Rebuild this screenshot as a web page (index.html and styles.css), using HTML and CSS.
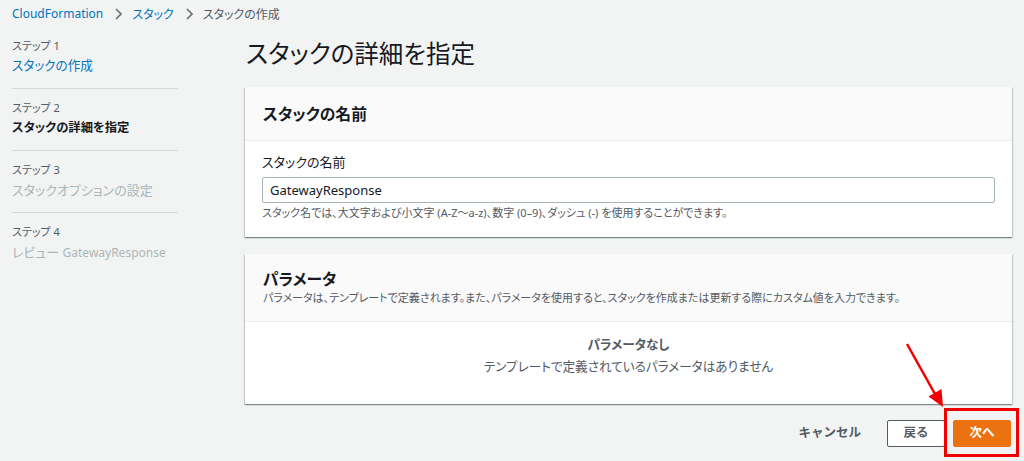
FILE: index.html
```html
<!DOCTYPE html>
<html lang="ja">
<head>
<meta charset="utf-8">
<title>スタックの詳細を指定</title>
<link rel="stylesheet" href="styles.css">
</head>
<body>
<div class="page">
  <nav class="crumbs">
    <a class="crumb-link" href="#">CloudFormation</a>
    <svg class="chev" width="7" height="12" viewBox="0 0 7 12"><path d="M1 1 L6 6 L1 11" fill="none" stroke="#687078" stroke-width="1.6"/></svg>
    <a class="crumb-link" href="#">スタック</a>
    <svg class="chev" width="7" height="12" viewBox="0 0 7 12"><path d="M1 1 L6 6 L1 11" fill="none" stroke="#687078" stroke-width="1.6"/></svg>
    <span class="crumb-current">スタックの作成</span>
  </nav>
  <div class="layout">
    <aside class="steps">
      <div class="step">
        <div class="step-label">ステップ 1</div>
        <a class="step-name step-link" href="#">スタックの作成</a>
      </div>
      <div class="step">
        <div class="step-label">ステップ 2</div>
        <div class="step-name step-active">スタックの詳細を指定</div>
      </div>
      <div class="step">
        <div class="step-label">ステップ 3</div>
        <div class="step-name step-disabled">スタックオプションの設定</div>
      </div>
      <div class="step step-last">
        <div class="step-label">ステップ 4</div>
        <div class="step-name step-disabled">レビュー <span class="latin">GatewayResponse</span></div>
      </div>
    </aside>
    <main class="main">
      <h1 class="title">スタックの詳細を指定</h1>
      <section class="card">
        <div class="card-head card-head-1">
          <h2 class="card-title">スタックの名前</h2>
        </div>
        <div class="card-body card-body-1">
          <label class="field-label" for="stackname">スタックの名前</label>
          <input class="field-input" id="stackname" type="text" value="GatewayResponse">
          <div class="field-help">スタック名では、大文字および小文字 (A-Z〜a-z)、数字 (0–9)、ダッシュ (-) を使用することができます。</div>
        </div>
      </section>
      <section class="card">
        <div class="card-head card-head-2">
          <h2 class="card-title">パラメータ</h2>
          <div class="card-desc">パラメータは、テンプレートで定義されます。また、パラメータを使用すると、スタックを作成または更新する際にカスタム値を入力できます。</div>
        </div>
        <div class="card-body card-body-2">
          <div class="empty-title">パラメータなし</div>
          <div class="empty-text">テンプレートで定義されているパラメータはありません</div>
        </div>
      </section>
      <div class="actions">
        <button class="btn btn-link">キャンセル</button>
        <button class="btn btn-normal">戻る</button>
        <span class="next-wrap">
          <button class="btn btn-primary">次へ</button>
          <span class="highlight-box"></span>
        </span>
      </div>
    </main>
  </div>
  <svg class="annot-arrow" width="1024" height="461" viewBox="0 0 1024 461">
    <line x1="907" y1="344" x2="935" y2="394" stroke="#f20000" stroke-width="2.5"/>
    <polygon points="943,407 941.5,389 928.5,396.5" fill="#f20000"/>
  </svg>
</div>
</body>
</html>
```
FILE: styles.css
```css
* { box-sizing: border-box; }
html, body {
  margin: 0;
  padding: 0;
  background: #f2f3f3;
}
body {
  font-family: "Noto Sans", "Noto Sans CJK JP", sans-serif;
  font-feature-settings: "palt";
  color: #16191f;
  font-size: 13px;
}
.page {
  position: relative;
  width: 1024px;
  height: 461px;
  overflow: hidden;
}
.crumbs {
  height: 27px;
  padding: 0 12px;
  display: flex;
  align-items: center;
  font-size: 12px;
}
.crumb-link {
  color: #0073bb;
  text-decoration: none;
}
.chev {
  margin: 0 10px 0 12px;
}
.crumb-current {
  color: #545b64;
}
.layout {
  display: flex;
}
.steps {
  width: 178px;
  padding-left: 12px;
  flex: none;
}
.step {
  padding: 11px 0 12px;
  border-bottom: 1px solid #d5dbdb;
}
.step-last {
  border-bottom: none;
}
.step-label {
  font-size: 11px;
  line-height: 16px;
  color: #545b64;
}
.step-name {
  display: block;
  margin-top: 2px;
  font-size: 13px;
  line-height: 20px;
  text-decoration: none;
}
.step-link { color: #0073bb; font-size: 12.6px; }
.step-active { color: #16191f; font-weight: 700; font-size: 12.3px; }
.step-disabled { color: #aab7b8; }
.latin { font-size: 12px; }

.main {
  margin-left: 67px;
  width: 767px;
  flex: none;
}
.title {
  margin: 11px 0 17px;
  font-size: 24.5px;
  line-height: 32px;
  font-weight: 400;
  color: #16191f;
  padding-left: 1px;
}
.card {
  background: #fff;
  box-shadow: 0 1px 1px 0 rgba(0,28,36,.3), 1px 1px 1px 0 rgba(0,28,36,.15), -1px 1px 1px 0 rgba(0,28,36,.15);
  margin-bottom: 17px;
}
.card-head {
  background: #fafafa;
  border-bottom: 1px solid #eaeded;
  padding: 0 18px;
}
.card-head-1 {
  height: 54px;
  display: flex;
  align-items: center;
}
.card-head-2 {
  padding-top: 14px;
  padding-bottom: 15px;
}
.card-title {
  margin: 0;
  font-size: 15.8px;
  line-height: 22px;
  font-weight: 700;
  color: #16191f;
}
.card-desc {
  font-size: 11px;
  line-height: 16px;
  color: #545b64;
}
.card-body-1 {
  padding: 11px 17px 16px;
}
.field-label {
  display: block;
  font-size: 13px;
  line-height: 20px;
  color: #16191f;
}
.field-input {
  display: block;
  width: 100%;
  height: 26px;
  margin-top: 5px;
  border: 1px solid #aab7b8;
  border-radius: 2px;
  padding: 0 7px;
  font-family: inherit;
  font-size: 13px;
  color: #16191f;
  background: #fff;
}
.field-help {
  margin-top: 2px;
  font-size: 11px;
  line-height: 16px;
  color: #545b64;
}
.card-body-2 {
  padding: 13px 17px 27px;
  text-align: center;
}
.empty-title {
  font-size: 12.6px;
  line-height: 20px;
  font-weight: 700;
  color: #545b64;
}
.empty-text {
  margin-top: 2px;
  font-size: 12.6px;
  line-height: 20px;
  color: #545b64;
}
.actions {
  margin-top: -1px;
  display: flex;
  justify-content: flex-end;
  align-items: center;
  gap: 8px;
  padding-right: 1px;
}
.btn {
  height: 27px;
  font-family: inherit;
  font-size: 12.5px;
  font-weight: 700;
  border-radius: 2px;
  cursor: pointer;
  line-height: 1;
}
.btn-link {
  background: transparent;
  border: none;
  color: #545b64;
  padding: 0 18px;
}
.btn-normal {
  background: #fff;
  border: 1px solid #545b64;
  color: #545b64;
  padding: 0 15px;
  width: 58px;
}
.btn-primary {
  background: #ec7211;
  border: 1px solid #ec7211;
  color: #fff;
  padding: 0 15px;
  width: 58px;
}
.next-wrap {
  position: relative;
  display: inline-flex;
}
.highlight-box {
  position: absolute;
  left: -9px;
  right: -8px;
  top: -12px;
  bottom: -10px;
  border: 3px solid #f20000;
  pointer-events: none;
}
.annot-arrow {
  position: absolute;
  left: 0;
  top: 0;
  pointer-events: none;
}
```
